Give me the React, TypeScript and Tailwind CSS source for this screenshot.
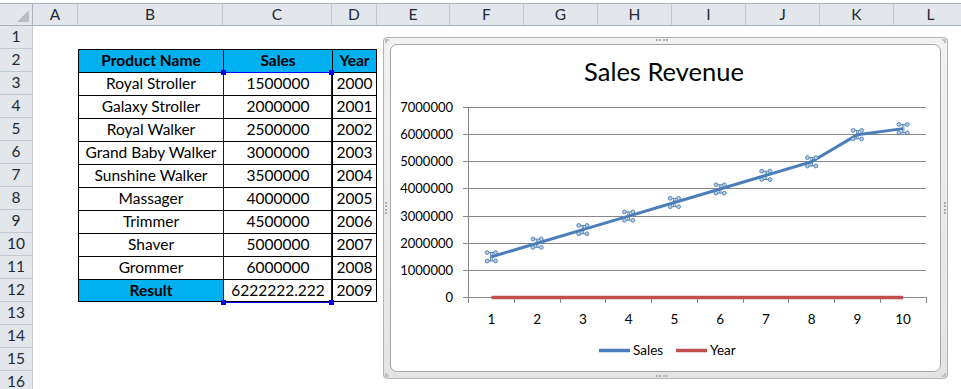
import React from 'react';

// Spreadsheet columns (header letter + pixel width)
const cols = [
  { k: 'A', w: 45 },
  { k: 'B', w: 145 },
  { k: 'C', w: 109 },
  { k: 'D', w: 45 },
  { k: 'E', w: 73 },
  { k: 'F', w: 74 },
  { k: 'G', w: 74 },
  { k: 'H', w: 74 },
  { k: 'I', w: 74 },
  { k: 'J', w: 74 },
  { k: 'K', w: 74 },
  { k: 'L', w: 74 },
];

const data: [string, string, string][] = [
  ['Royal Stroller', '1500000', '2000'],
  ['Galaxy Stroller', '2000000', '2001'],
  ['Royal Walker', '2500000', '2002'],
  ['Grand Baby Walker', '3000000', '2003'],
  ['Sunshine Walker', '3500000', '2004'],
  ['Massager', '4000000', '2005'],
  ['Trimmer', '4500000', '2006'],
  ['Shaver', '5000000', '2007'],
  ['Grommer', '6000000', '2008'],
];

const sales = [1.5, 2, 2.5, 3, 3.5, 4, 4.5, 5, 6, 6.2222222];

function cellFor(row: number, col: string) {
  if (row < 2 || row > 12 || !['B', 'C', 'D'].includes(col)) return null;
  const isHead = row === 2;
  const isResult = row === 12;
  let text = '';
  if (isHead) text = col === 'B' ? 'Product Name' : col === 'C' ? 'Sales' : 'Year';
  else if (isResult) text = col === 'B' ? 'Result' : col === 'C' ? '6222222.222' : '2009';
  else {
    const d = data[row - 3];
    text = col === 'B' ? d[0] : col === 'C' ? d[1] : d[2];
  }
  const blue = isHead || (isResult && col === 'B');
  return { text, blue, bold: blue };
}

const X0 = 468.5;
const STEP = 45.75;
const Y0 = 297.5;
const UNIT = 27.14;
const cx = (i: number) => X0 + STEP * (i + 0.5);
const cy = (v: number) => Y0 - v * UNIT;

function Marker({ x, y }: { x: number; y: number }) {
  const r = 1.9;
  const d = 4.2;
  return (
    <g stroke="#4f7db0" strokeWidth={0.9}>
      <line x1={x - d} y1={y - d} x2={x + d} y2={y - d} />
      <line x1={x - d} y1={y + d} x2={x + d} y2={y + d} />
      <line x1={x - 0.8} y1={y - d} x2={x - 0.8} y2={y + d} />
      <line x1={x + 0.8} y1={y - d} x2={x + 0.8} y2={y + d} />
      {[
        [x - d, y - d],
        [x + d, y - d],
        [x - d, y + d],
        [x + d, y + d],
      ].map(([a, b], i) => (
        <circle key={i} cx={a} cy={b} r={r} fill="#b3cfea" />
      ))}
    </g>
  );
}

function Chart() {
  const grid = [0, 1, 2, 3, 4, 5, 6, 7];
  const pts = sales.map((v, i) => `${cx(i)},${cy(v)}`).join(' ');
  return (
    <div className="absolute left-[383px] top-[37px] w-[565px] h-[342px] rounded-[4px] border border-[#b3b3b3] bg-gradient-to-b from-[#f2f2f2] to-[#e4e4e4] p-[6px]">
      {/* resize grips */}
      <div className="absolute left-[272px] top-[1px] w-[12px] border-t-2 border-dotted border-[#b0b0b0]" />
      <div className="absolute left-[272px] bottom-[1px] w-[12px] border-t-2 border-dotted border-[#b0b0b0]" />
      <div className="absolute top-[164px] left-[1px] h-[12px] border-l-2 border-dotted border-[#b0b0b0]" />
      <div className="absolute top-[164px] right-[1px] h-[12px] border-l-2 border-dotted border-[#b0b0b0]" />
      <div className="absolute left-[1px] top-[1px] w-[4px] h-[4px] border-l-2 border-t-2 border-dotted border-[#c0c0c0]" />
      <div className="absolute right-[1px] top-[1px] w-[4px] h-[4px] border-r-2 border-t-2 border-dotted border-[#c0c0c0]" />
      <div className="absolute left-[1px] bottom-[1px] w-[4px] h-[4px] border-l-2 border-b-2 border-dotted border-[#c0c0c0]" />
      <div className="absolute right-[1px] bottom-[1px] w-[4px] h-[4px] border-r-2 border-b-2 border-dotted border-[#c0c0c0]" />
      <div className="w-full h-full rounded-[7px] border border-[#a6a6a6] bg-white" />
      <svg
        className="absolute left-[-1px] top-[-1px]"
        width={565}
        height={342}
        viewBox="383 37 565 342"
        fontFamily="Lato, 'Open Sans', sans-serif"
      >
        <text x={664} y={80.5} textAnchor="middle" fontSize={25.5} fill="#000">
          Sales Revenue
        </text>
        {grid.map((k) => {
          const y = Math.round(cy(k) - 0.5) + 0.5;
          return (
            <g key={k}>
              <line x1={463} y1={y} x2={926} y2={y} stroke="#878787" strokeWidth={1} />
              <text x={453} y={y + 4.5} textAnchor="end" fontSize={13} fill="#000">
                {k === 0 ? '0' : `${k}000000`}
              </text>
            </g>
          );
        })}
        <line x1={X0} y1={107} x2={X0} y2={298} stroke="#878787" strokeWidth={1} />
        {Array.from({ length: 11 }).map((_, i) => {
          const x = Math.round(X0 + STEP * i - 0.5) + 0.5;
          return <line key={i} x1={x} y1={297} x2={x} y2={303} stroke="#878787" strokeWidth={1} />;
        })}
        {sales.map((_, i) => (
          <text key={i} x={cx(i)} y={323.5} textAnchor="middle" fontSize={13.5} fill="#000">
            {i + 1}
          </text>
        ))}
        <line x1={cx(0)} y1={297.5} x2={cx(9)} y2={297.5} stroke="#c0504d" strokeWidth={3.5} />
        <polyline points={pts} fill="none" stroke="#4a7ebb" strokeWidth={3} strokeLinejoin="round" />
        {sales.map((v, i) => (
          <Marker key={i} x={cx(i)} y={cy(v)} />
        ))}
        {/* legend */}
        <line x1={599} y1={350.5} x2={630} y2={350.5} stroke="#4a7ebb" strokeWidth={3.5} />
        <text x={633} y={355} fontSize={13.5} fill="#000">
          Sales
        </text>
        <line x1={676} y1={350.5} x2={707} y2={350.5} stroke="#c0504d" strokeWidth={3.5} />
        <text x={710} y={355} fontSize={13.5} fill="#000">
          Year
        </text>
      </svg>
    </div>
  );
}

export default function App() {
  const rows = Array.from({ length: 16 }, (_, i) => i + 1);
  return (
    <div className="relative w-[961px] h-[389px] overflow-hidden bg-white font-['Lato','Open_Sans',sans-serif] text-[15.5px] text-black">
      <div className="h-[3px] bg-white" />
      {/* column headers */}
      <div className="flex h-[23px] border-t border-b border-[#a9b2bd] bg-[#e3e6eb] text-[#1e2a36]">
        <div className="relative w-[33px] shrink-0 border-r border-[#a9b2bd]">
          <svg className="absolute right-[3px] bottom-[3px]" width={12} height={12}>
            <polygon points="12,0 12,12 0,12" fill="#b9bec6" />
          </svg>
        </div>
        {cols.map((c) => (
          <div
            key={c.k}
            style={{ width: c.w }}
            className="shrink-0 flex items-center justify-center border-r border-[#c3c9d1]"
          >
            {c.k}
          </div>
        ))}
      </div>
      {/* rows */}
      {rows.map((r) => (
        <div key={r} className="flex h-[23px]">
          <div className="w-[33px] shrink-0 flex items-center justify-center bg-[#e3e6eb] border-r border-b border-[#c3c9d1] text-[#1e2a36]">
            {r}
          </div>
          {cols.map((c) => {
            const cell = cellFor(r, c.k);
            if (!cell) return <div key={c.k} style={{ width: c.w }} className="shrink-0" />;
            return (
              <div
                key={c.k}
                style={{ width: c.w }}
                className={[
                  'shrink-0 flex items-center justify-center whitespace-nowrap border-t border-l border-black',
                  c.k === 'D' ? 'border-r' : '',
                  r === 12 ? 'border-b' : '',
                  cell.blue ? 'bg-[#00b0f0]' : 'bg-white',
                  cell.bold ? 'font-bold' : '',
                ].join(' ')}
              >
                {cell.text}
              </div>
            );
          })}
        </div>
      ))}
      {/* selected source range C3:C12 */}
      <div className="absolute left-[223px] top-[72px] w-[109px] h-[231px] border border-[#0000ff]" />
      <div className="absolute left-[221px] top-[70px] w-[5px] h-[5px] bg-[#0000ff]" />
      <div className="absolute left-[329px] top-[70px] w-[5px] h-[5px] bg-[#0000ff]" />
      <div className="absolute left-[221px] top-[300px] w-[5px] h-[5px] bg-[#0000ff]" />
      <div className="absolute left-[329px] top-[300px] w-[5px] h-[5px] bg-[#0000ff]" />
      <Chart />
    </div>
  );
}
